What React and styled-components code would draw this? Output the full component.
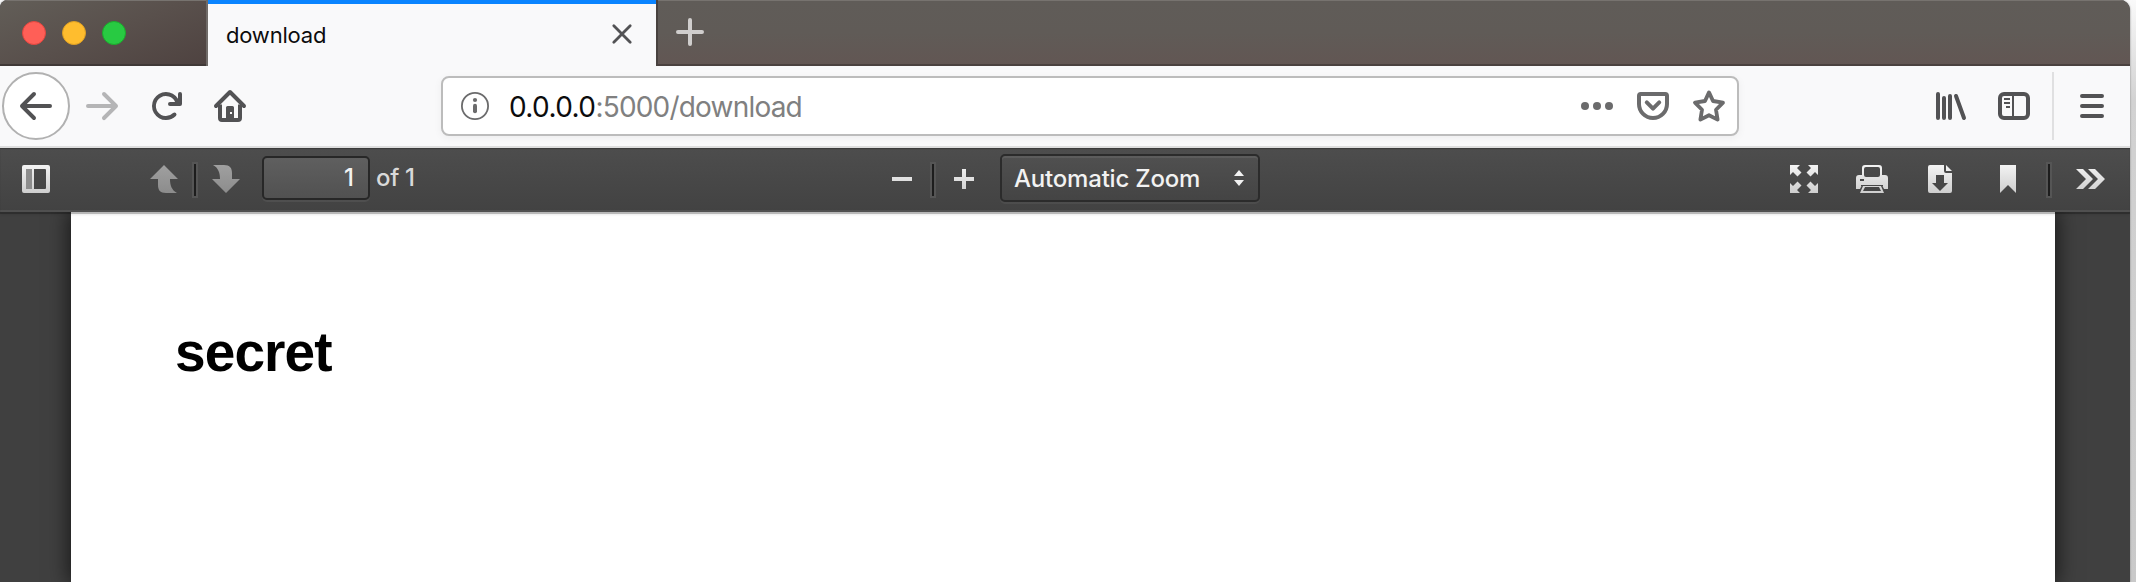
import React from "react";
import styled, { createGlobalStyle } from "styled-components";

const GlobalStyle = createGlobalStyle`
  * { box-sizing: border-box; }
  body {
    margin: 0;
    background: linear-gradient(#fafafa 0, #d2d2d2 100px, #c9c9c9 100%);
    font-family: Inter, "Liberation Sans", sans-serif;
  }
`;

const Window = styled.main`
  width: 2130px;
  height: 582px;
  display: flex;
  flex-direction: column;
  overflow: hidden;
  border-radius: 8px 10px 0 0;
  background: #404040;
  box-shadow: 0 0 2px #777;
`;

const TabStrip = styled.header`
  height: 66px;
  flex: none;
  display: flex;
`;

const WindowControls = styled.div`
  width: 208px;
  padding: 0 0 0 22px;
  display: flex;
  align-items: center;
  gap: 16px;
  border-right: 2px solid #706b68;
  background: linear-gradient(160deg, #625e58 0%, #59504c 50%, #4e4240 100%);
  box-shadow: inset 0 1px #77736f, inset 0 -2px #403937;
`;

const Light = styled.span`
  width: 24px;
  height: 24px;
  border-radius: 50%;
  background: ${(p) => p.$color};
  border: 1px solid ${(p) => p.$edge};
`;

const Tab = styled.div`
  width: 448px;
  padding: 0 22px 0 18px;
  display: flex;
  align-items: center;
  justify-content: space-between;
  border-top: 4px solid #0a84ff;
  background: #f9f9fa;
`;

const TabTitle = styled.span`
  font-size: 22px;
  line-height: 26px;
  letter-spacing: -0.2px;
  color: #0c0c0d;
`;

const TabClose = styled.span`
  display: flex;
  padding-bottom: 2px;
`;

const StripRest = styled.div`
  flex: 1;
  display: flex;
  align-items: center;
  padding: 0 0 2px 18px;
  border-left: 2px solid #48423f;
  background: linear-gradient(#605c58 0%, #605b57 50%, #625653 100%);
  box-shadow: inset 0 1px #77736f, inset 0 -2px #4a413f;
`;

const NavBar = styled.nav`
  height: 82px;
  flex: none;
  display: flex;
  align-items: center;
  padding: 0 22px 0 2px;
  background: #f9f9fa;
  border-bottom: 2px solid #dedede;
`;

const BackButton = styled.span`
  width: 68px;
  height: 68px;
  display: grid;
  place-items: center;
  border: 2px solid #b1b1b1;
  border-radius: 50%;
  background: #fff;
`;

const NavActions = styled.div`
  display: flex;
  gap: 32px;
  margin-left: 16px;
`;

const UrlBar = styled.div`
  width: 1298px;
  height: 60px;
  margin-left: 195px;
  padding: 0 12px 0 16px;
  display: flex;
  align-items: center;
  border: 2px solid #bcbcbc;
  border-radius: 8px;
  background: #fff;
  box-shadow: 0 2px 8px rgba(0, 0, 0, 0.05);
`;

const UrlText = styled.span`
  margin: 2px 0 0 18px;
  font-size: 28px;
  font-weight: 430;
  line-height: 34px;
  letter-spacing: -0.6px;
  color: #0c0c0d;
`;

const UrlPath = styled.span`
  letter-spacing: -0.8px;
  color: #808080;
`;

const PageActions = styled.div`
  margin-left: auto;
  display: flex;
  gap: 24px;
`;

const WindowActions = styled.div`
  margin-left: auto;
  display: flex;
  align-items: center;
`;

const NavDivider = styled.span`
  width: 2px;
  height: 68px;
  margin: 0 22px;
  background: #e0e0e1;
`;

const PdfToolbar = styled.div`
  position: relative;
  height: 64px;
  flex: none;
  display: flex;
  align-items: center;
  padding: 0 25px 2px 22px;
  background: linear-gradient(#4d4d4d, #424242);
  box-shadow: inset 0 1px 1px #3a3a3a, inset 0 -2px #505050,
    0 2px rgba(0, 0, 0, 0.22), 0 3px 2px rgba(0, 0, 0, 0.08);
`;

const ToolGroup = styled.div`
  display: flex;
  align-items: center;
  flex: none;
  width: ${(p) => (p.$width ? `${p.$width}px` : "auto")};
  margin-left: ${(p) => (p.$end ? "auto" : 0)};
`;

const Space = styled.span`
  width: ${(p) => p.$w}px;
`;

const Split = styled.span`
  width: 6px;
  height: 36px;
  margin-top: 2px;
  border: 2px solid #555;
  background: #1d1d1d;
`;

const PageInput = styled.span`
  width: 108px;
  height: 44px;
  margin-bottom: 2px;
  padding-right: 14px;
  display: flex;
  align-items: center;
  justify-content: flex-end;
  border: 2px solid #272727;
  border-radius: 5px;
  background: linear-gradient(#5f5f5f, #515151);
  box-shadow: 0 2px rgba(255, 255, 255, 0.06);
  color: #f2f2f2;
  font-size: 24px;
  font-weight: 500;
  line-height: 28px;
`;

const Label = styled.span`
  margin-bottom: 2px;
  color: #d9d9d9;
  font-size: 24px;
  font-weight: 500;
  line-height: 28px;
  letter-spacing: -0.3px;
`;

const ZoomSelect = styled.span`
  width: 260px;
  height: 48px;
  margin-bottom: 2px;
  padding: 0 14px 0 12px;
  display: flex;
  align-items: center;
  justify-content: space-between;
  border: 2px solid #2b2b2b;
  border-radius: 5px;
  background: linear-gradient(#505050, #444);
  box-shadow: inset 0 2px rgba(255, 255, 255, 0.07), 0 2px rgba(255, 255, 255, 0.05);
  color: #f2f2f2;
  font-size: 24px;
  font-weight: 500;
  line-height: 28px;
  letter-spacing: -0.2px;
`;

const ZoomLabel = styled.span`
  padding-top: 2px;
`;

const Viewer = styled.section`
  flex: 1;
  padding: 0 75px 0 71px;
  display: flex;
  background: #404040;
  overflow: hidden;
`;

const Paper = styled.article`
  flex: 1;
  padding: 109px 0 0 104px;
  background: #fff;
  box-shadow: 0 0 20px 2px rgba(0, 0, 0, 0.65);
`;

const Heading = styled.h1`
  margin: 0;
  font: bold 55px/62px "Liberation Sans", Arial, sans-serif;
  letter-spacing: -0.9px;
  color: #000;
`;

const Glyph = styled.svg`
  display: block;
  flex: none;
  overflow: visible;
  color: ${(p) => p.$color || "#525254"};
`;

const Defs = styled.svg`
  position: absolute;
`;

const Icon = ({ color, children }) => (
  <Glyph width="32" height="32" viewBox="0 0 16 16" $color={color} fill="currentColor">
    {children}
  </Glyph>
);

const Line = (props) => (
  <path fill="none" stroke="currentColor" strokeWidth="2" strokeLinecap="round" strokeLinejoin="round" {...props} />
);

const Tool = ({ w, h = 28, dim, children }) => (
  <Glyph width={w} height={h} viewBox={`0 0 ${w} ${h}`} fill={dim ? "url(#dim)" : "url(#lit)"}>
    {children}
  </Glyph>
);

const Gradients = () => (
  <Defs width="0" height="0" aria-hidden="true">
    <defs>
      <linearGradient id="lit" gradientUnits="userSpaceOnUse" x1="0" y1="0" x2="0" y2="28">
        <stop offset="0" stopColor="#f3f3f3" />
        <stop offset="1" stopColor="#cecece" />
      </linearGradient>
      <linearGradient id="dim" gradientUnits="userSpaceOnUse" x1="0" y1="0" x2="0" y2="28">
        <stop offset="0" stopColor="#a0a0a0" />
        <stop offset="1" stopColor="#8c8c8c" />
      </linearGradient>
    </defs>
  </Defs>
);

export default function App() {
  return (
    <Window>
      <GlobalStyle />
      <Gradients />
      <TabStrip>
        <WindowControls>
          <Light $color="#ff5f57" $edge="#e2463f" />
          <Light $color="#ffbd2e" $edge="#dfa023" />
          <Light $color="#28ca42" $edge="#1bac2c" />
        </WindowControls>
        <Tab>
          <TabTitle>download</TabTitle>
          <TabClose>
            <Glyph width="24" height="24" viewBox="0 0 24 24">
              <Line d="M3.800 3.800l16.400 16.400M20.200 3.800L3.800 20.200" strokeWidth="2.8" />
            </Glyph>
          </TabClose>
        </Tab>
        <StripRest>
          <Glyph width="28" height="28" viewBox="0 0 28 28" $color="#d0cecd">
            <Line d="M14 2v24M2 14h24" strokeWidth="4" />
          </Glyph>
        </StripRest>
      </TabStrip>

      <NavBar>
        <BackButton>
          <Icon>
            <path d="M15 7H3.414l4.293-4.293a1 1 0 0 0-1.414-1.414l-6 6a1 1 0 0 0 0 1.414l6 6a1 1 0 0 0 1.414-1.414L3.414 9H15a1 1 0 0 0 0-2z" />
          </Icon>
        </BackButton>
        <NavActions>
          <Icon color="#b5b5b6">
            <path d="M15.707 7.293l-6-6a1 1 0 0 0-1.414 1.414L12.586 7H1a1 1 0 0 0 0 2h11.586l-4.293 4.293a1 1 0 1 0 1.414 1.414l6-6a1 1 0 0 0 0-1.414z" />
          </Icon>
          <Icon>
            <path d="M15 1a1 1 0 0 0-1 1v2.418A6.995 6.995 0 1 0 8 15a6.954 6.954 0 0 0 4.950-2.050 1 1 0 0 0-1.414-1.414A5.019 5.019 0 1 1 12.549 6H10a1 1 0 0 0 0 2h5a1 1 0 0 0 1-1V2a1 1 0 0 0-1-1z" />
          </Icon>
          <Icon>
            <Line d="M1 8l7-7 7 7" />
            <Line d="M3 7.200V14a1 1 0 0 0 1 1h8a1 1 0 0 0 1-1V7.200" strokeLinecap="butt" />
            <path fillRule="evenodd" d="M6.800 8h2.400a.8.8 0 0 1 .8.800V15H6V8.800a.8.8 0 0 1 .8-.8zM8 11v1h1v-1z" />
          </Icon>
        </NavActions>
        <UrlBar>
          <Icon color="#6b6b6c">
            <circle cx="8" cy="8" r="6.55" fill="none" stroke="currentColor" strokeWidth=".9" />
            <circle cx="8" cy="5" r="1.05" />
            <rect x="7" y="6.9" width="2" height="4.7" rx="1" />
          </Icon>
          <UrlText>
            0.0.0.0<UrlPath>:5000/download</UrlPath>
          </UrlText>
          <PageActions>
            <Icon color="#6b6b6c">
              <circle cx="2" cy="8" r="2" />
              <circle cx="8" cy="8" r="2" />
              <circle cx="14" cy="8" r="2" />
            </Icon>
            <Icon color="#6b6b6c">
              <Line d="M1.900 2h12.200a.9.9 0 0 1 .9.900V7A7 7 0 0 1 1 7V2.900A.9.9 0 0 1 1.900 2z" />
              <Line d="M4.900 6.200L8 9.300l3.100-3.100" />
            </Icon>
            <Icon color="#6b6b6c">
              <Line
                d="M8 1.200l2 4.300 5 .8-3.500 3.600.8 4.900L8 12.600l-4.300 2.200.8-4.900L1 6.300l5-.8z"
                strokeWidth="1.9"
              />
            </Icon>
          </PageActions>
        </UrlBar>
        <WindowActions>
          <Icon>
            <Line d="M2 2v12M5 4v10M8 3v11M11 3l4 11" />
          </Icon>
          <Space $w={32} />
          <Icon>
            <rect x="1" y="2" width="14" height="12" rx="2" fill="none" stroke="currentColor" strokeWidth="2" />
            <path d="M7 2h1v12H7zM3 4h3v1H3zM3 6h3v1H3zM4 8h2v1H4z" />
          </Icon>
          <NavDivider />
          <Icon>
            <Line d="M3 3h10M3 8h10M3 13h10" />
          </Icon>
        </WindowActions>
      </NavBar>

      <PdfToolbar>
        <ToolGroup $width={870}>
          <Tool w={28}>
            <path fillRule="evenodd" d="M2 0h24a2 2 0 0 1 2 2v24a2 2 0 0 1-2 2H2a2 2 0 0 1-2-2V2a2 2 0 0 1 2-2zM5 4a1 1 0 0 0-1 1v18a1 1 0 0 0 1 1h18a1 1 0 0 0 1-1V5a1 1 0 0 0-1-1z" />
            <rect x="4" y="4" width="6" height="20" fill="#8d8d8d" />
            <rect x="10" y="4" width="2" height="20" />
          </Tool>
          <Space $w={100} />
          <Tool w={28} dim>
            <path d="M14 0L28 14H20C20 20 21.500 25 27 28H16C10 28 8 25 8 20V14H0z" />
          </Tool>
          <Space $w={14} />
          <Split />
          <Space $w={14} />
          <Tool w={28} dim>
            <path d="M14 28L28 14H20V8C20 3 18 0 12 0H1C6.500 3 8 8 8 14H0z" />
          </Tool>
          <Space $w={22} />
          <PageInput>1</PageInput>
          <Space $w={6} />
          <Label>of 1</Label>
        </ToolGroup>
        <ToolGroup>
          <Tool w={20}>
            <path d="M0 12h20v4H0z" />
          </Tool>
          <Space $w={18} />
          <Split />
          <Space $w={18} />
          <Tool w={20}>
            <path d="M8 4h4v8h8v4h-8v8H8v-8H0v-4h8z" />
          </Tool>
          <Space $w={26} />
          <ZoomSelect>
            <ZoomLabel>Automatic Zoom</ZoomLabel>
            <Glyph width="10" height="16" viewBox="0 0 10 16" $color="#f2f2f2" fill="currentColor">
              <path d="M5 0l5 6H0zM5 16l5-6H0z" />
            </Glyph>
          </ZoomSelect>
        </ToolGroup>
        <ToolGroup $end>
          <Tool w={28}>
            <path d="M0 0h10L7 3l4.500 4.500-4 4L3 7l-3 3zM28 0H18l3 3-4.500 4.500 4 4L25 7l3 3zM0 28h10l-3-3 4.500-4.500-4-4L3 21l-3-3zM28 28H18l3-3-4.500-4.500 4-4L25 21l3-3z" />
          </Tool>
          <Space $w={38} />
          <Tool w={32}>
            <path fillRule="evenodd" d="M9 0h14a3 3 0 0 1 3 3v7h3a3 3 0 0 1 3 3v11h-4l-1.500-3H27v-1H5v1h.5L4 24H0V13a3 3 0 0 1 3-3h3V3a3 3 0 0 1 3-3zM10 2a2 2 0 0 0-2 2v6a2 2 0 0 0 2 2h12a2 2 0 0 0 2-2V4a2 2 0 0 0-2-2zM4 14v2h4v-2z" />
            <path fillRule="evenodd" d="M7 21h18l3 7H4zM9 22l-2 4h18l-2-4z" />
          </Tool>
          <Space $w={40} />
          <Tool w={24}>
            <path fillRule="evenodd" d="M2 0h14v6a2 2 0 0 0 2 2h6v18a2 2 0 0 1-2 2H2a2 2 0 0 1-2-2V2a2 2 0 0 1 2-2zM8 10v8H4l8 8 8-8h-4v-8z" />
            <path d="M18 0l6 6h-6z" />
          </Tool>
          <Space $w={48} />
          <Tool w={16}>
            <path d="M0 0h16v28l-8-8-8 8z" />
          </Tool>
          <Space $w={30} />
          <Split />
          <Space $w={24} />
          <Tool w={29}>
            <path d="M0 4h7l10 10L7 24H0l10-10zM12 4h7l10 10-10 10h-7l10-10z" />
          </Tool>
        </ToolGroup>
      </PdfToolbar>

      <Viewer>
        <Paper>
          <Heading>secret</Heading>
        </Paper>
      </Viewer>
    </Window>
  );
}
